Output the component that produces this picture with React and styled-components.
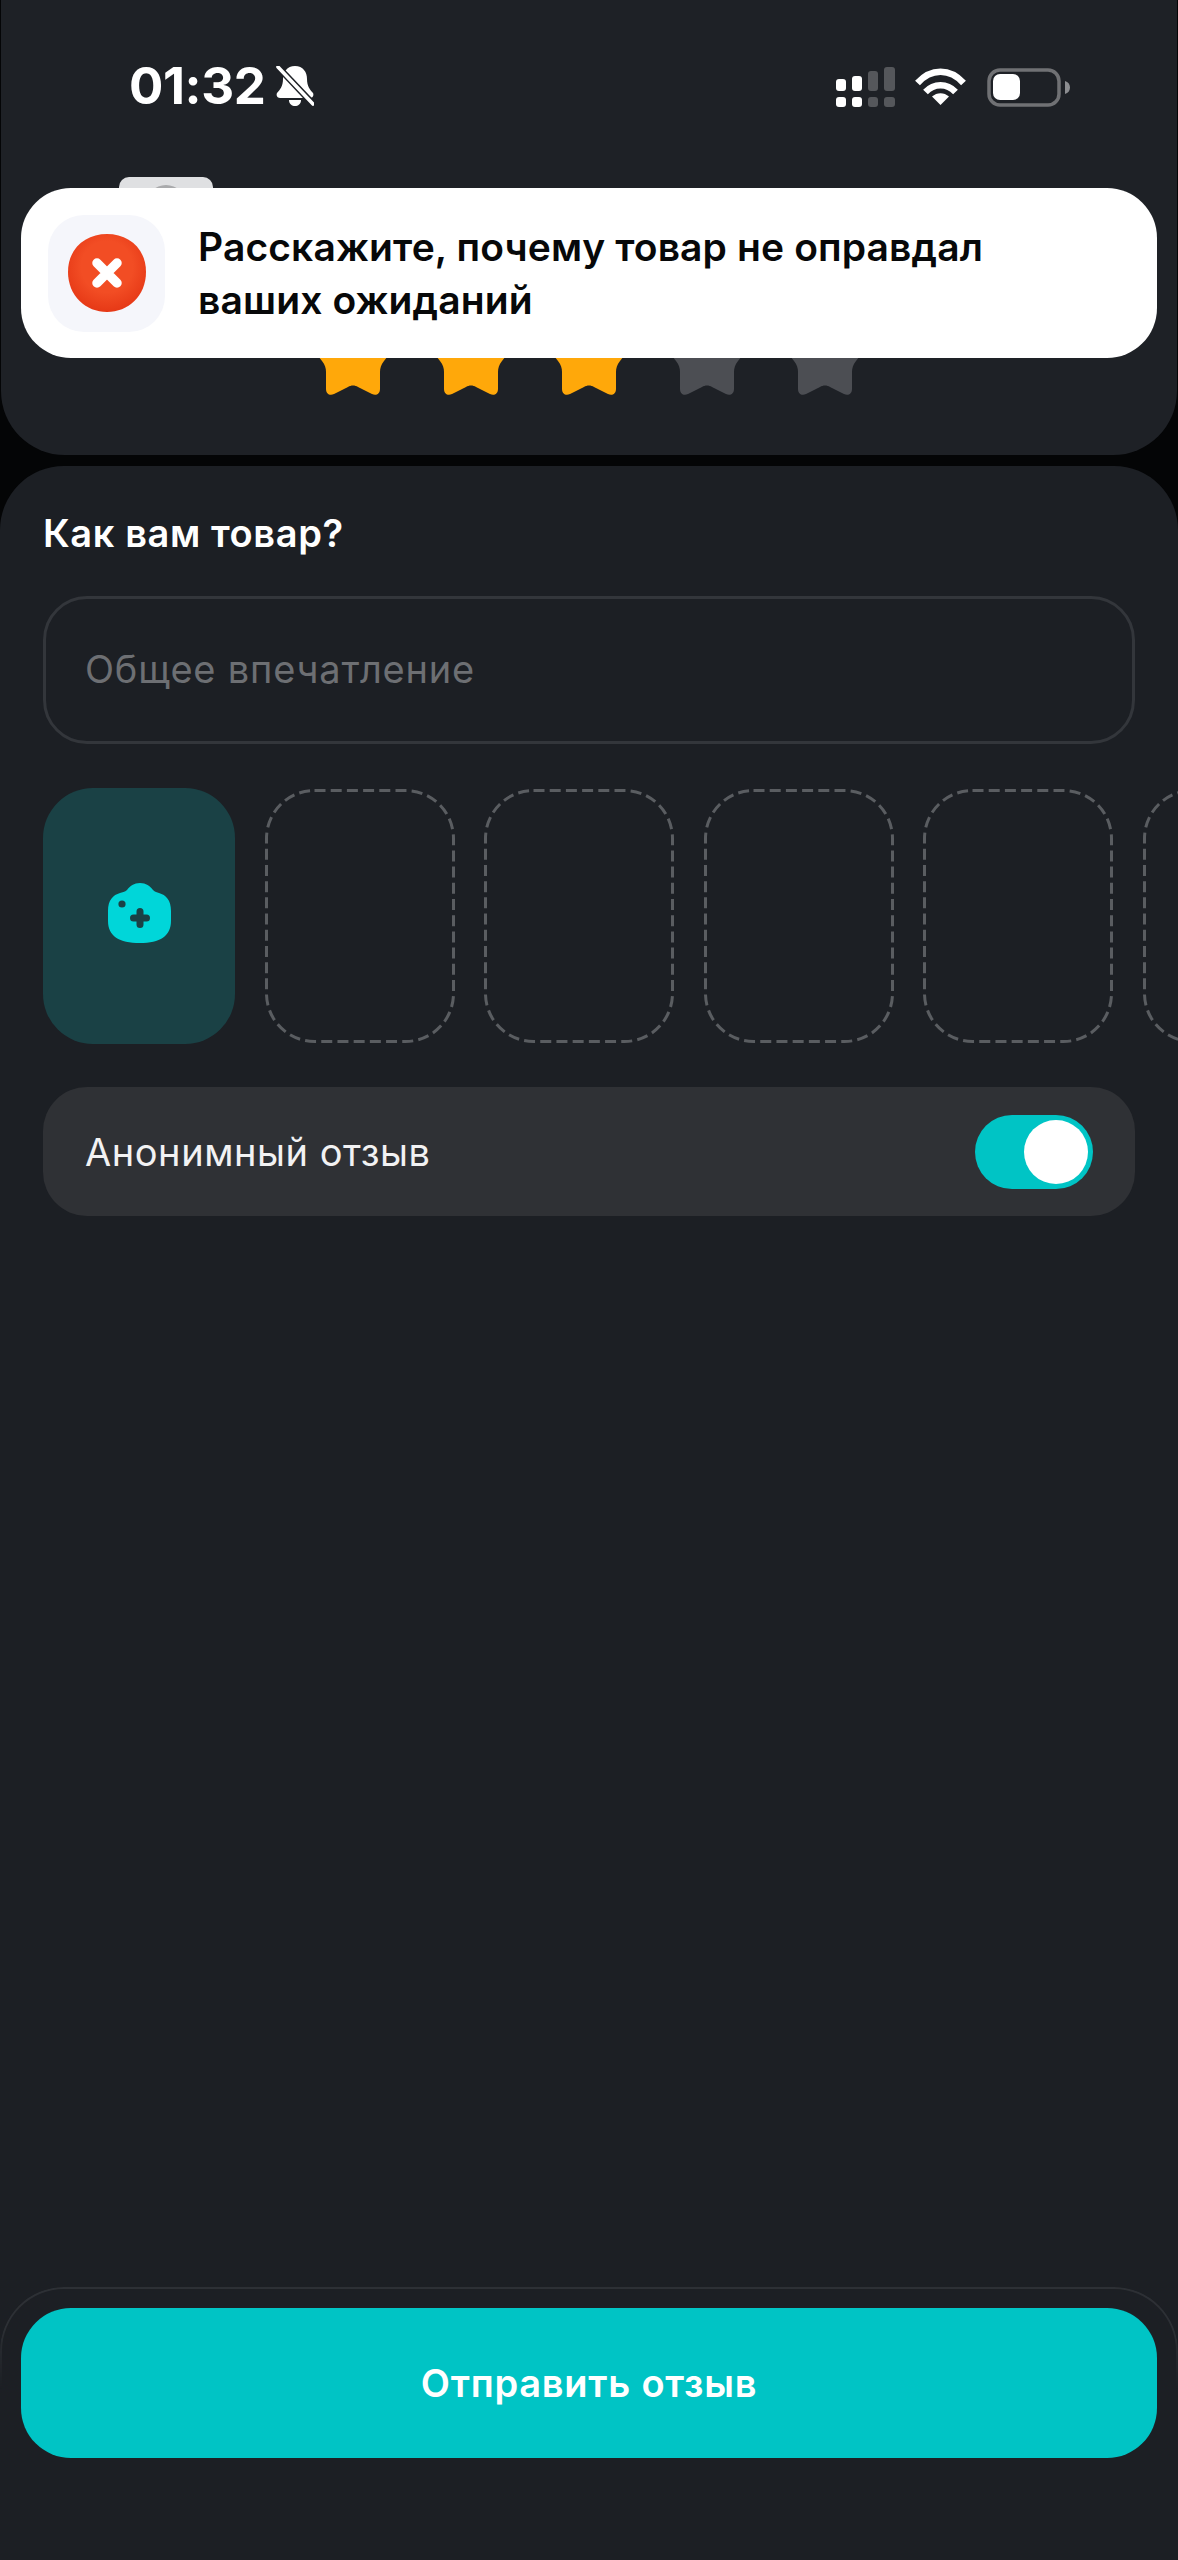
import React from "react";
import styled, { createGlobalStyle } from "styled-components";

const Global = createGlobalStyle`
  html, body { margin: 0; padding: 0; background: #040506; }
  * { box-sizing: border-box; }
  body { font-family: "Inter", "Noto Sans", sans-serif; }
`;

const Page = styled.div`
  width: 1178px;
  height: 2560px;
  position: relative;
  overflow: hidden;
  display: flex;
  flex-direction: column;
  background: #040506;
`;
const TopCard = styled.section`
  height: 455px;
  flex: none;
  background: #1e2126;
  border-radius: 0 0 64px 64px;
  margin: 0 1px;
`;
const StatusBar = styled.div`
  height: 114px;
  padding: 60px 105px 0 128px;
  display: flex;
  justify-content: space-between;
  align-items: flex-start;
`;
const TimeGroup = styled.div`
  display: flex;
  align-items: center;
  gap: 11px;
  height: 52px;
`;
const Time = styled.span`
  font: 700 51px/52px "Inter", sans-serif;
  color: #fff;
  letter-spacing: -0.4px;
`;
const StatusIcons = styled.div`
  display: flex;
  align-items: flex-start;
  margin-top: 5px;
`;
const Thumb = styled.div`
  width: 94px;
  height: 94px;
  margin: 63px 0 0 118px;
  border-radius: 10px;
  background: #dfe0e2;
  display: flex;
  justify-content: center;
  padding-top: 8px;
`;
const ThumbDot = styled.div`
  width: 40px;
  height: 40px;
  border-radius: 50%;
  background: #a9aaac;
`;
const Stars = styled.div`
  margin-top: 44px;
  display: flex;
  justify-content: center;
  gap: 38px;
`;
const Toast = styled.div`
  position: absolute;
  left: 21px;
  top: 188px;
  width: 1136px;
  height: 170px;
  border-radius: 50px;
  background: #fff;
  display: flex;
  align-items: center;
  gap: 33px;
  padding: 0 27px;
`;
const ToastIcon = styled.div`
  width: 117px;
  height: 117px;
  flex: none;
  border-radius: 36px;
  background: #f5f6fb;
  display: flex;
  align-items: center;
  justify-content: center;
`;
const ToastText = styled.p`
  margin: 0 0 1px;
  font: 600 39px/53px "Inter", sans-serif;
  letter-spacing: 0.12px;
  color: #070809;
  width: 880px;
`;
const FormCard = styled.section`
  flex: 1;
  margin: 11px 0 0;
  background: #1c1f24;
  border-radius: 64px 64px 0 0;
  display: flex;
  flex-direction: column;
  padding-top: 44px;
`;
const Title = styled.h2`
  margin: 0 0 0 43px;
  font: 600 38px/46px "Inter", sans-serif;
  letter-spacing: 0.6px;
  color: #fff;
`;
const InputBox = styled.div`
  margin: 40px 43px 0;
  height: 148px;
  border: 3px solid #33363b;
  border-radius: 44px;
  display: flex;
  align-items: center;
  padding: 0 0 2px 39px;
  font: 400 38px/46px "Inter", sans-serif;
  letter-spacing: 0.8px;
  color: #6d6f73;
`;
const MediaRow = styled.div`
  margin-top: 44px;
  padding-left: 43px;
  display: flex;
  gap: 29.5px;
  overflow: hidden;
  flex: none;
`;
const AddTile = styled.div`
  width: 192px;
  height: 256px;
  flex: none;
  border-radius: 50px;
  background: #1a4145;
  display: flex;
  align-items: center;
  justify-content: center;
  padding-bottom: 6px;
`;
const EmptyTile = styled.div`
  position: relative;
  width: 190px;
  height: 256px;
  flex: none;
`;
const DashFrame = styled.svg`
  position: absolute;
  inset: 0;
`;
const AnonRow = styled.div`
  margin: 43px 43px 0;
  height: 129px;
  flex: none;
  border-radius: 44px;
  background: #2f3135;
  display: flex;
  align-items: center;
  justify-content: space-between;
  padding: 0 42px 0 42px;
  font: 400 38px/44px "Inter", sans-serif;
  letter-spacing: 0.55px;
  color: #f2f2f3;
`;
const Toggle = styled.div`
  position: relative;
  width: 118px;
  height: 74px;
  border-radius: 37px;
  background: #00c4c5;
`;
const Knob = styled.div`
  position: absolute;
  top: 5px;
  right: 5px;
  width: 64px;
  height: 64px;
  border-radius: 50%;
  background: #fff;
`;
const Footer = styled.div`
  position: relative;
  margin-top: auto;
  padding: 21px 21px 102px;
  &::before {
    content: "";
    position: absolute;
    left: 0;
    right: 0;
    top: 0;
    height: 100px;
    border: 2px solid #2d3035;
    border-bottom: 0;
    border-radius: 64px 64px 0 0;
    -webkit-mask-image: linear-gradient(#000 40%, transparent);
    mask-image: linear-gradient(#000 40%, transparent);
  }
`;
const SubmitButton = styled.button`
  display: block;
  width: 100%;
  height: 150px;
  border: 0;
  border-radius: 50px;
  background: #00c4c5;
  color: #fff;
  font: 600 38px/46px "Inter", sans-serif;
  letter-spacing: 0.75px;
  padding: 0;
  position: relative;
`;

const Star = ({ color }) => (
  <svg width="80" height="80" viewBox="0 0 80 80" style={{ overflow: "visible", flex: "none" }}>
    <path
      fill={color}
      d="M40 1C43 1 45 3 47 7L54 22L73 25C80 26 82 33 78 37L71 46C68 50 67 53 67 57L67 74C67 79 63 81 59 79L45 72C42 70 38 70 35 72L21 79C17 81 13 79 13 74L13 57C13 53 12 50 9 46L2 37C-2 33 0 26 7 25L26 22L33 7C35 3 37 1 40 1Z"
    />
  </svg>
);

const BellOff = () => (
  <svg width="38" height="40" viewBox="0 0 38 40">
    <path fill="#fff" d="M19 0C27 0 31 6 31 13C31 20 34 24 37 27C38 29 37 32 34 32L4 32C1 32 0 29 1 27C4 24 7 20 7 13C7 6 11 0 19 0Z" />
    <path fill="#fff" d="M13 34H25C25 38 22 40 19 40C16 40 13 38 13 34Z" />
    <path d="M2 1L37 38" stroke="#1e2126" strokeWidth="6.5" />
    <path d="M2 1L37 38" stroke="#fff" strokeWidth="3.6" strokeLinecap="round" />
  </svg>
);

const StatusGlyphs = () => (
  <svg width="236" height="44" viewBox="836 64 236 44">
    <g fill="#fff">
      <rect x="836" y="78" width="10" height="12" rx="3" />
      <rect x="852" y="75" width="10" height="15" rx="3" />
      <rect x="836" y="96" width="10" height="10" rx="3" />
      <rect x="852" y="96" width="10" height="10" rx="3" />
    </g>
    <g fill="#55575b">
      <rect x="868" y="70" width="10" height="20" rx="3" />
      <rect x="884" y="66" width="11" height="24" rx="3" />
      <rect x="868" y="96" width="10" height="10" rx="3" />
      <rect x="884" y="96" width="11" height="10" rx="3" />
    </g>
    <g fill="none" stroke="#fff" strokeWidth="6.5">
      <path d="M917.5 82C931 67 950 67 963.5 82" />
      <path d="M925.5 91C934 82 947 82 955.5 91" />
    </g>
    <path fill="#fff" d="M940.5 104L932 95.5C937 91 944 91 949 95.5Z" />
    <rect x="989" y="69" width="70" height="35" rx="11" fill="none" stroke="#707174" strokeWidth="3.5" />
    <rect x="993" y="73" width="27" height="26" rx="7" fill="#fff" />
    <path fill="#8c8d90" d="M1065 80C1068 81 1070 83 1070 86.5C1070 90 1068 92 1065 93Z" />
  </svg>
);

const ErrorBadge = () => (
  <svg width="78" height="78" viewBox="0 0 78 78">
    <defs>
      <radialGradient id="badge" cx="0.5" cy="0.42" r="0.6">
        <stop offset="0.55" stopColor="#f24d24" />
        <stop offset="1" stopColor="#e53715" />
      </radialGradient>
    </defs>
    <path fill="url(#badge)" d="M39 0C60 0 78 14 78 38C78 62 60 78 39 78C18 78 0 62 0 38C0 14 18 0 39 0Z" />
    <path d="M29 29L49 49M49 29L29 49" stroke="#fff" strokeWidth="9.5" strokeLinecap="round" />
  </svg>
);

const CameraPlus = () => (
  <svg width="63" height="60" viewBox="0 0 63 60">
    <path fill="#00d6d9" d="M32 0C38 0 42 3 45 7C47 9 49 9 51 10C58 12 63 17 63 28L63 38C63 53 52 60 32 60C11 60 0 53 0 38L0 28C0 17 5 12 12 10C14 9 17 9 19 7C22 3 26 0 32 0Z" />
    <circle cx="14" cy="21" r="3.6" fill="#1a4145" />
    <path d="M32 28.5V41.5M25.5 35H38.5" stroke="#1a4145" strokeWidth="7" strokeLinecap="round" />
  </svg>
);

const Dashed = () => (
  <EmptyTile>
    <DashFrame width="190" height="256" viewBox="0 0 190 256">
      <rect x="1.5" y="2.5" width="187" height="251" rx="48" fill="none" stroke="#5a5d61" strokeWidth="3" strokeDasharray="11 5.2" />
    </DashFrame>
  </EmptyTile>
);

export default function App() {
  return (
    <Page>
      <Global />
      <TopCard>
        <StatusBar>
          <TimeGroup>
            <Time>01:32</Time>
            <BellOff />
          </TimeGroup>
          <StatusIcons>
            <StatusGlyphs />
          </StatusIcons>
        </StatusBar>
        <Thumb>
          <ThumbDot />
        </Thumb>
        <Stars>
          <Star color="#ffa80a" />
          <Star color="#ffa80a" />
          <Star color="#ffa80a" />
          <Star color="#4c4e53" />
          <Star color="#4c4e53" />
        </Stars>
      </TopCard>
      <Toast>
        <ToastIcon>
          <ErrorBadge />
        </ToastIcon>
        <ToastText>Расскажите, почему товар не оправдал ваших ожиданий</ToastText>
      </Toast>
      <FormCard>
        <Title>Как вам товар?</Title>
        <InputBox>Общее впечатление</InputBox>
        <MediaRow>
          <AddTile>
            <CameraPlus />
          </AddTile>
          <Dashed />
          <Dashed />
          <Dashed />
          <Dashed />
          <Dashed />
        </MediaRow>
        <AnonRow>
          Анонимный отзыв
          <Toggle>
            <Knob />
          </Toggle>
        </AnonRow>
        <Footer>
          <SubmitButton>Отправить отзыв</SubmitButton>
        </Footer>
      </FormCard>
    </Page>
  );
}
